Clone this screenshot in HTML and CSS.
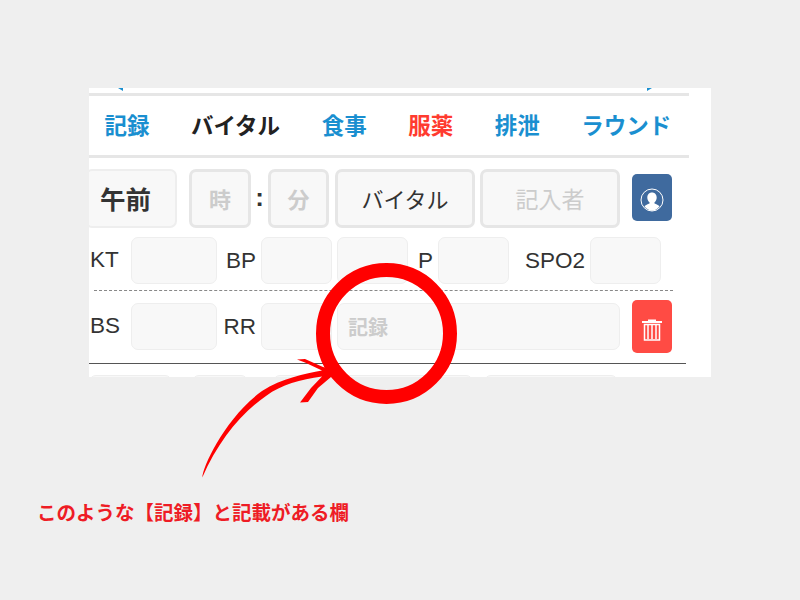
FILE: index.html
```html
<!DOCTYPE html>
<html lang="ja">
<head>
  <meta charset="UTF-8">
  <title>記録欄</title>
  <link rel="stylesheet" href="styles.css">
</head>
<body>
  <div class="page">
    <!-- Cropped app screen -->
    <div class="panel">
      <nav class="tabs">
        <span class="tab">記録</span>
        <span class="tab tab-current">バイタル</span>
        <span class="tab">食事</span>
        <span class="tab tab-alert">服薬</span>
        <span class="tab">排泄</span>
        <span class="tab">ラウンド</span>
      </nav>

      <!-- Time row -->
      <div class="time-row">
        <div class="box box-ampm">午前</div>
        <div class="box box-thick box-hour">時</div>
        <span class="colon">:</span>
        <div class="box box-thick box-minute">分</div>
        <div class="box box-thick box-kind">バイタル</div>
        <div class="box box-thick box-writer">記入者</div>
        <button class="icon-btn btn-user" type="button">
          <svg width="24" height="24" viewBox="0 0 24 24">
            <circle cx="12" cy="12" r="11" fill="none" stroke="#fff" stroke-width="1"/>
            <path d="M12 4.500c-3 0-4.700 2.200-4.700 5 0 2 .9 3.800 2.200 4.800v1.200c-1.800.8-4 1.400-5.100 2.800A10.700 10.700 0 0 0 12 22.700c3 0 5.600-1.600 7.600-4.400-1.100-1.400-3.300-2-5.100-2.800v-1.200c1.300-1 2.200-2.800 2.200-4.800 0-2.800-1.700-5-4.700-5z" fill="#fff"/>
          </svg>
        </button>
      </div>

      <!-- Vitals -->
      <div class="field-row">
        <label class="lbl lbl-first">KT</label>
        <div class="box box-wide"></div>
        <label class="lbl lbl-bp">BP</label>
        <div class="box box-small"></div>
        <div class="box box-small box-next"></div>
        <label class="lbl lbl-p">P</label>
        <div class="box box-small"></div>
        <label class="lbl lbl-spo">SPO2</label>
        <div class="box box-small"></div>
      </div>
      <div class="dashed"></div>
      <div class="field-row field-row-note">
        <label class="lbl lbl-first">BS</label>
        <div class="box box-wide"></div>
        <label class="lbl lbl-bp">RR</label>
        <div class="box box-small"></div>
        <div class="box box-note box-next">記録</div>
        <button class="icon-btn btn-delete" type="button">
          <svg width="22" height="24" viewBox="0 0 22 24">
            <path d="M1 5h20M8 5V3.500h6V5" fill="none" stroke="#fff" stroke-width="2"/>
            <path d="M3.500 7.500h15V23h-15z" fill="none" stroke="#fff" stroke-width="1.500"/>
            <path d="M7 8v14M11 8v14M15 8v14" stroke="#fff" stroke-width="1.500"/>
          </svg>
        </button>
      </div>
      <div class="solid"></div>

      <!-- Next row, cut off by the crop -->
      <div class="next-row">
        <div class="box stub-a"></div>
        <div class="box stub-b"></div>
        <div class="box stub-c"></div>
        <div class="box stub-d"></div>
      </div>
    </div>

    <p class="caption">このような【記録】と記載がある欄</p>
  </div>

  <!-- Hand drawn annotation on top of the screen -->
  <svg class="markup" width="800" height="600" viewBox="0 0 800 600">
    <path d="M118 88h5v3zM647 91l5-3h-5z" fill="#1a8fd0"/>
    <circle cx="386.500" cy="333.500" r="63.500" fill="none" stroke="#ff0000" stroke-width="14"/>
    <path d="M202.300 477.500C203 466 225 418 262 391C282 378 305 374 322 370.500L305 362.500L297 359.500L305 359L323 367L340 371L331 377L318 388L308 402L300 402.500L311 388L322 376.500C300 380 282 384 266 396C240 414 218 442 202.300 477.500z" fill="#ff0000"/>
  </svg>
</body>
</html>
```

FILE: styles.css
```css
/* Base */
body {
  margin: 0;
  height: 600px;
  overflow: hidden;
  background-color: #efefef;
  font-family: "Liberation Sans", "Noto Sans CJK JP", sans-serif;
  color: #333333;
}
.page {
  padding-top: 88px;
}

/* Screen crop */
.panel {
  width: 622px;
  height: 289px;
  margin-left: 89px;
  overflow: hidden;
  background-color: #ffffff;
}

/* Tabs */
.tabs {
  display: flex;
  gap: 41.500px;
  align-items: center;
  box-sizing: border-box;
  width: 600px;
  height: 65px;
  margin-top: 5px;
  padding: 0 0 3px 15.500px;
  border-top: 3px solid #e6e6e6;
  border-bottom: 3px solid #e6e6e6;
  font-size: 22.500px;
  font-weight: bold;
  color: #1a8fd0;
  white-space: nowrap;
}
.tab-current {
  color: #222222;
}
.tab-alert {
  color: #ff3b30;
}

/* Shared input look */
.box {
  box-sizing: border-box;
  flex: none;
  display: flex;
  align-items: center;
  justify-content: center;
  background-color: #f8f8f8;
  border: 1px solid #eeeeee;
  border-radius: 7px;
}
.box-thick {
  padding-bottom: 2px;
  border: 3px solid #e6e6e6;
  font-size: 22px;
  color: #333333;
}

/* Time row */
.time-row {
  display: flex;
  height: 59px;
  margin-top: 11px;
}
.box-ampm {
  width: 92px;
  margin-left: -4px;
  padding: 0 11px 2px 0;
  border-width: 2px;
  font-size: 25.500px;
  font-weight: bold;
}
.box-hour {
  width: 62px;
  margin-left: 12px;
  font-weight: bold;
  color: #cccccc;
}
.colon {
  width: 17px;
  text-align: center;
  font-size: 26px;
  font-weight: bold;
  line-height: 57px;
}
.box-minute {
  width: 61px;
  font-weight: bold;
  color: #cccccc;
}
.box-kind {
  width: 140px;
  margin-left: 6px;
}
.box-writer {
  width: 140px;
  margin-left: 5px;
  font-size: 23px;
  color: #cccccc;
}

/* Square buttons */
.icon-btn {
  display: flex;
  align-items: center;
  justify-content: center;
  flex: none;
  width: 40px;
  padding: 0;
  border: none;
  border-radius: 5px;
}
.btn-user {
  height: 47px;
  margin: 5px 0 0 12px;
  padding-top: 4px;
  background-color: #3f6a9e;
}
.btn-delete {
  height: 53px;
  margin: -3px 0 0 12px;
  padding-top: 4px;
  background-color: #ff4b44;
}

/* Vitals rows */
.field-row {
  display: flex;
  height: 47px;
  margin-top: 9px;
  font-size: 22.500px;
}
.field-row-note {
  margin-top: 12px;
}
.lbl {
  box-sizing: border-box;
  flex: none;
  align-self: center;
  padding-right: 5px;
  text-align: right;
}
.lbl-first {
  width: 42px;
  padding: 0 0 1px 1px;
  text-align: left;
}
.lbl-bp {
  width: 44px;
}
.lbl-p {
  width: 30px;
}
.lbl-spo {
  width: 81px;
}
.box-wide {
  width: 86px;
}
.box-small {
  width: 71px;
}
.box-next {
  margin-left: 5px;
}
.box-note {
  width: 283px;
  justify-content: flex-start;
  padding-left: 10px;
  font-size: 20px;
  font-weight: bold;
  color: #cccccc;
}

/* Dividers */
.dashed {
  width: 579px;
  margin: 6px 0 0 5px;
  border-top: 1px dashed #888888;
}
.solid {
  width: 597px;
  margin-top: 13px;
  border-top: 1px solid #555555;
}

/* Next row */
.next-row {
  display: flex;
  height: 47px;
  margin-top: 11px;
}
.stub-a {
  width: 83px;
}
.stub-b {
  width: 56px;
  margin-left: 20px;
}
.stub-c {
  width: 200px;
  margin-left: 25px;
}
.stub-d {
  width: 134px;
  margin-left: 11px;
}

/* Caption */
.caption {
  margin: 121px 0 0 37px;
  font-family: "Noto Sans CJK JP", sans-serif;
  font-size: 19.500px;
  font-weight: bold;
  line-height: 28px;
  color: #ee1c25;
  white-space: nowrap;
}

/* Annotation overlay */
.markup {
  position: absolute;
  left: 0;
  top: 0;
}
```
